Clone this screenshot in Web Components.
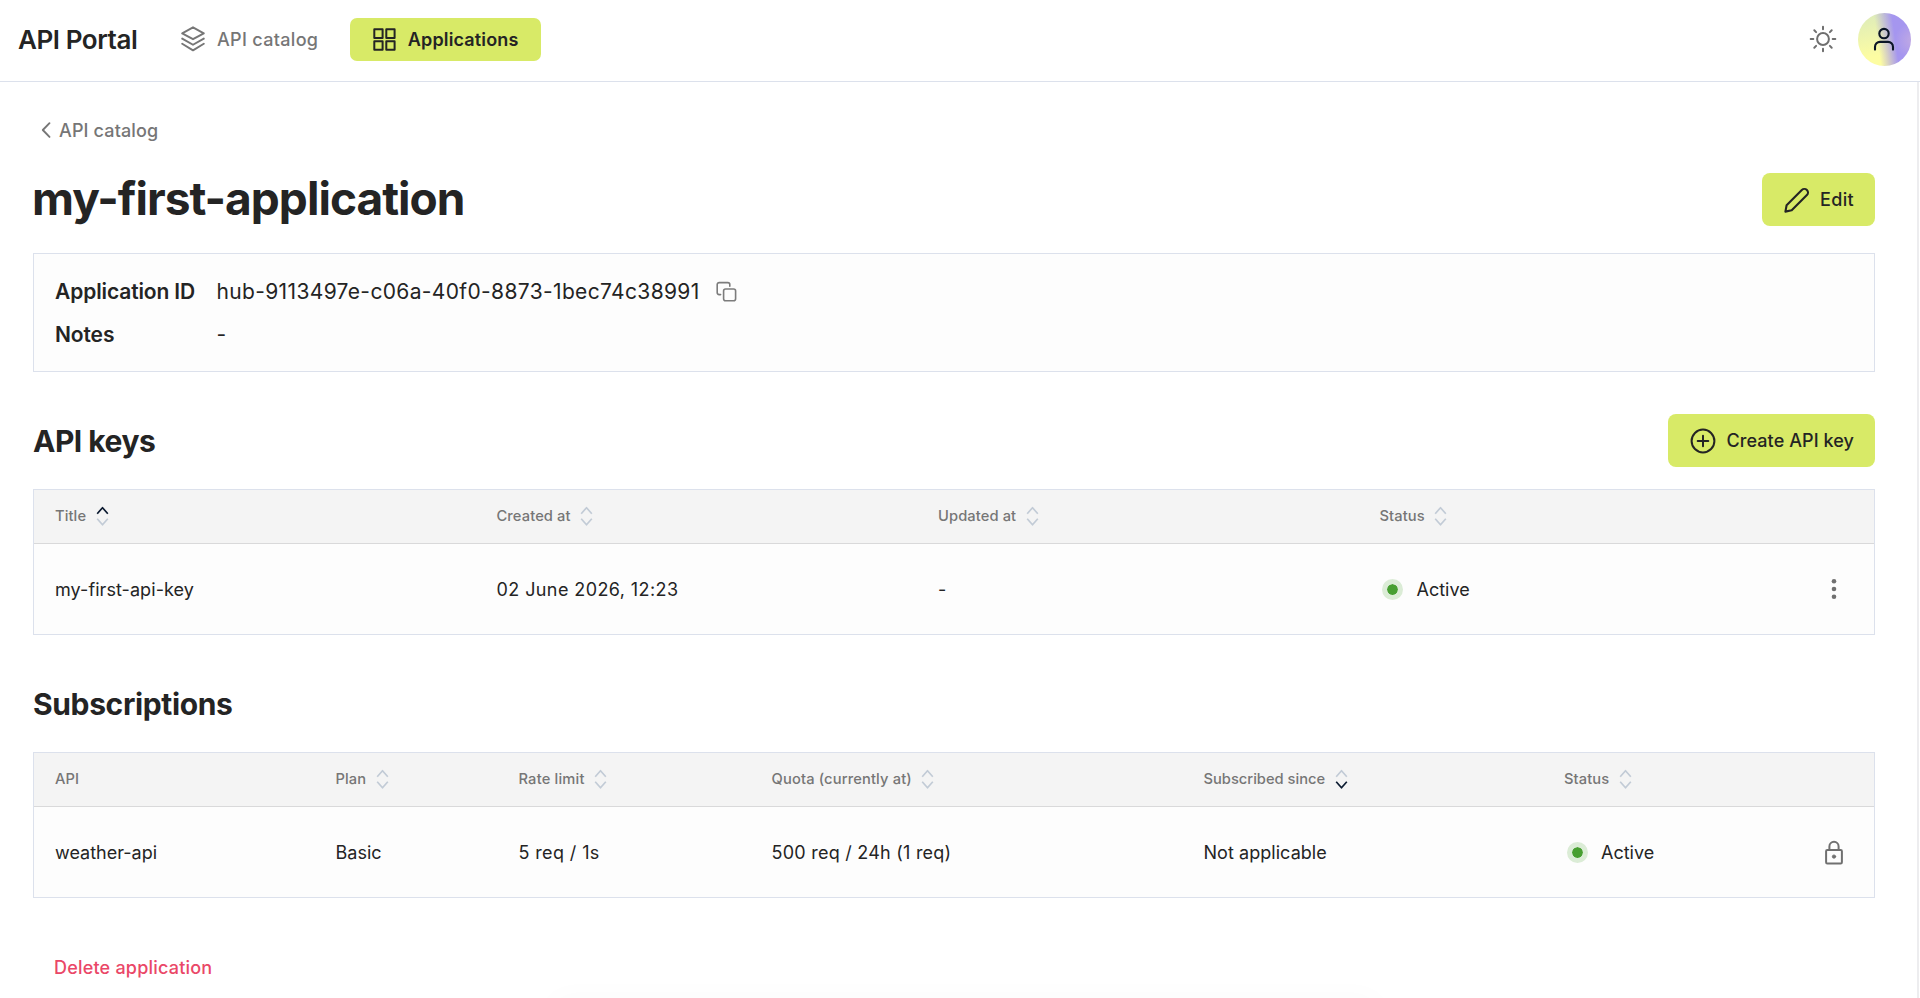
<!DOCTYPE html>
<html lang="en">
<head>
<meta charset="utf-8">
<title>API Portal</title>
<style>
    :root {
        --color-primary: #d8ea67;
        --color-text: #242424;
        --color-muted: #767676;
        --color-border: #dce1ec;
        --color-danger: #ea4767;
    }
    body {
        margin: 0;
        height: 998px;
        overflow: hidden;
        background: #fff;
        color: var(--color-text);
        font-family: Inter, "Liberation Sans", sans-serif;
        font-size: 18px;
    }
</style>
</head>
<body>
<portal-page>
    <portal-header slot="header">
        <nav-item icon="layers" style="letter-spacing: .32px">API catalog</nav-item>
        <nav-item icon="grid" active style="letter-spacing: .15px">Applications</nav-item>
    </portal-header>

    <back-link>API catalog</back-link>

    <section-head level="1">
        my-first-application
        <portal-button slot="action" icon="pencil" style="letter-spacing: .35px">Edit</portal-button>
    </section-head>

    <info-card>
        <info-row label="Application ID" copy>hub-9113497e-c06a-40f0-8873-1bec74c38991</info-row>
        <info-row label="Notes">-</info-row>
    </info-card>

    <section-head style="letter-spacing: -.5px">
        API keys
        <portal-button slot="action" icon="plus" style="letter-spacing: .08px">Create API key</portal-button>
    </section-head>

    <data-table columns="441.5px 441.5px 441.5px 1fr 80px">
        <head-cell sort="asc">Title</head-cell>
        <head-cell sort="none">Created at</head-cell>
        <head-cell sort="none">Updated at</head-cell>
        <head-cell sort="none">Status</head-cell>
        <head-cell></head-cell>
        <body-cell style="letter-spacing: .07px">my-first-api-key</body-cell>
        <body-cell style="letter-spacing: .41px">02 June 2026, 12:23</body-cell>
        <body-cell>-</body-cell>
        <body-cell><status-badge>Active</status-badge></body-cell>
        <body-cell action><svg-icon name="dots"></svg-icon></body-cell>
    </data-table>

    <section-head style="letter-spacing: -.36px">Subscriptions</section-head>

    <data-table columns="280.5px 183px 253px 432px 360.5px 1fr 80px">
        <head-cell>API</head-cell>
        <head-cell sort="none">Plan</head-cell>
        <head-cell sort="none" style="letter-spacing: .18px">Rate limit</head-cell>
        <head-cell sort="none" style="letter-spacing: .14px">Quota (currently at)</head-cell>
        <head-cell sort="desc" style="letter-spacing: 0">Subscribed since</head-cell>
        <head-cell sort="none">Status</head-cell>
        <head-cell></head-cell>
        <body-cell>weather-api</body-cell>
        <body-cell>Basic</body-cell>
        <body-cell style="letter-spacing: .38px">5 req / 1s</body-cell>
        <body-cell style="letter-spacing: .24px">500 req / 24h (1 req)</body-cell>
        <body-cell style="letter-spacing: .05px">Not applicable</body-cell>
        <body-cell><status-badge>Active</status-badge></body-cell>
        <body-cell action><svg-icon name="lock"></svg-icon></body-cell>
    </data-table>

    <delete-link>Delete application</delete-link>
</portal-page>

<script>
const ICONS = {
    layers: { w: 24, h: 26, stroke: 1.9, body: '<path d="M12 1.3 22.8 7.4 12 13.2 1.2 7.4zM1.2 12.6 12 18.8l10.8-6.2M1.2 17.8 12 24.4l10.8-6.6"/>' },
    grid: { w: 23, h: 23, stroke: 2, body: '<path d="M1.3 1.3h8.3v8.6H1.3zM13.3 1.3h8.3v8.6h-8.3zM1.3 13.3h8.3v8.4H1.3zM13.3 13.3h8.3v8.4h-8.3z"/>' },
    sun: { w: 28, h: 28, stroke: 2, body: '<circle cx="14" cy="14" r="5.9"/><path d="M14 1.7v2.6M14 23.7v2.6M1.7 14h2.6M23.7 14h2.6M5.3 5.3l1.8 1.8M20.9 20.9l1.8 1.8M5.3 22.7l1.8-1.8M20.9 7.1l1.8-1.8"/>' },
    user: { w: 24, h: 24, stroke: 2.1, body: '<circle cx="12" cy="6.6" r="4.7"/><path d="M3 22.6v-2.7a5 5 0 0 1 5-5h8a5 5 0 0 1 5 5v2.7"/>' },
    back: { w: 12, h: 18, stroke: 1.9, body: '<path d="M9.5 2.2 2.8 9l6.7 6.9"/>' },
    pencil: { w: 25, h: 26, stroke: 2.1, body: '<path d="M1.4 24.6 2.6 18.2 17.8 3a3.6 3.6 0 0 1 5.1 5.1L7.7 23.3z"/>' },
    plus: { w: 26, h: 26, stroke: 2, body: '<circle cx="13" cy="13" r="11.4"/><path d="M13 7.7v10.6M7.7 13h10.6"/>' },
    copy: { w: 21, h: 21, stroke: 1.6, body: '<rect x="7.6" y="8" width="12" height="11.8" rx="2"/><path d="M4.6 13.6H3.2a2 2 0 0 1-2-2V3.6a2 2 0 0 1 2-2h8.6a2 2 0 0 1 2 2v1.6"/>' },
    dots: { w: 6, h: 22, stroke: 0, body: '<g fill="currentColor"><circle cx="3" cy="3.2" r="2.3"/><circle cx="3" cy="11" r="2.3"/><circle cx="3" cy="18.8" r="2.3"/></g>' },
    lock: { w: 20, h: 25, stroke: 2, body: '<rect x="2.1" y="10" width="15.8" height="13.4" rx="1.2"/><path d="M5.4 10V6.4a4.6 4.6 0 0 1 9.2 0V10"/><circle cx="10" cy="16.6" r="1.7" fill="currentColor" stroke-width=".8"/>' }
};

// attach a shadow root with the given markup
function render(el, html) {
    el.attachShadow({ mode: 'open' });
    el.shadowRoot.innerHTML = html;
}

class SvgIcon extends HTMLElement {
    connectedCallback() {
        if (this.shadowRoot) {
            return;
        }
        const icon = ICONS[this.getAttribute('name')];
        render(this, `
            <style>
                :host { display: inline-flex; flex: none; }
                svg { display: block; }
            </style>
            <svg width="${icon.w}" height="${icon.h}" viewBox="0 0 ${icon.w} ${icon.h}" fill="none"
                stroke="currentColor" stroke-width="${icon.stroke}" stroke-linecap="round" stroke-linejoin="round">${icon.body}</svg>
        `);
    }
}

class PortalPage extends HTMLElement {
    constructor() {
        super();
        render(this, `
            <style>
                :host { display: flex; flex-direction: column; height: 998px; position: relative; }
                main {
                    flex: 1;
                    min-height: 0;
                    display: flex;
                    flex-direction: column;
                    padding: 0 42px 0 33px;
                    border-right: 2px solid #ededef;
                    margin-right: 1px;
                }
                /* faint glow that rises from below the fold */
                .glow {
                    position: absolute;
                    left: 550px;
                    bottom: -30px;
                    width: 830px;
                    height: 30px;
                    border-radius: 30px;
                    box-shadow: 0 0 30px rgba(0,0,0,0.025);
                }
            </style>
            <slot name="header"></slot>
            <main><slot></slot></main>
            <div class="glow"></div>
        `);
    }
}

class PortalHeader extends HTMLElement {
    constructor() {
        super();
        render(this, `
            <style>
                :host {
                    display: flex;
                    align-items: center;
                    flex: none;
                    box-sizing: border-box;
                    height: 82px;
                    padding: 0 9px 3px 18px;
                    border-bottom: 1px solid var(--color-border);
                }
                .brand {
                    width: 141px;
                    font-size: 26px;
                    font-weight: 600;
                    letter-spacing: -.44px;
                    white-space: nowrap;
                }
                nav { display: flex; gap: 9.5px; flex: 1; }
                .theme { color: #6f6f6f; margin-right: 21px; }
                .avatar {
                    display: flex;
                    align-items: center;
                    justify-content: center;
                    width: 53px;
                    height: 53px;
                    border-radius: 50%;
                    color: #0b1526;
                    background:
                        radial-gradient(circle at 104% 52%, rgba(196,172,226,.9) 0, rgba(196,172,226,0) 30%),
                        linear-gradient(82deg, transparent 38%, #a596ef 68%),
                        linear-gradient(170deg, #e0edb8 10%, #fdfda2 75%);
                }
                .avatar svg-icon { margin-right: 1px; }
            </style>
            <div class="brand">API Portal</div>
            <nav><slot></slot></nav>
            <svg-icon class="theme" name="sun"></svg-icon>
            <div class="avatar"><svg-icon name="user"></svg-icon></div>
        `);
    }
}

class NavItem extends HTMLElement {
    connectedCallback() {
        if (this.shadowRoot) {
            return;
        }
        render(this, `
            <style>
                :host {
                    display: flex;
                    align-items: center;
                    gap: 12px;
                    height: 43px;
                    padding: 0 22px;
                    border-radius: 7px;
                    color: var(--color-muted);
                    font-weight: 500;
                    white-space: nowrap;
                }
                :host([active]) {
                    background: var(--color-primary);
                    color: var(--color-text);
                    font-weight: 600;
                    padding: 0 22px 0 23px;
                }
            </style>
            <svg-icon name="${this.getAttribute('icon')}"></svg-icon>
            <span><slot></slot></span>
        `);
    }
}

class BackLink extends HTMLElement {
    constructor() {
        super();
        render(this, `
            <style>
                :host {
                    display: flex;
                    align-items: center;
                    gap: 7px;
                    height: 30px;
                    margin: 33px 0 28px 7px;
                    color: var(--color-muted);
                    font-weight: 500;
                    letter-spacing: .14px;
                }
            </style>
            <svg-icon name="back"></svg-icon>
            <span><slot></slot></span>
        `);
    }
}

class PortalButton extends HTMLElement {
    connectedCallback() {
        if (this.shadowRoot) {
            return;
        }
        render(this, `
            <style>
                :host {
                    display: flex;
                    align-items: center;
                    gap: 11px;
                    height: 53px;
                    padding: 0 21px 0 22px;
                    border-radius: 8px;
                    background: var(--color-primary);
                    color: var(--color-text);
                    font-size: 18px;
                    font-weight: 500;
                    white-space: nowrap;
                }
            </style>
            <svg-icon name="${this.getAttribute('icon')}"></svg-icon>
            <span><slot></slot></span>
        `);
    }
}

class SectionHead extends HTMLElement {
    constructor() {
        super();
        render(this, `
            <style>
                :host {
                    display: flex;
                    align-items: center;
                    justify-content: space-between;
                    height: 53px;
                    margin: 42px 0 22px;
                }
                :host([level="1"]) { margin: 0 0 27px; }
                .title { font-size: 30px; font-weight: 650; white-space: nowrap; }
                :host([level="1"]) .title { font-size: 46px; letter-spacing: -.97px; margin-top: -4px; margin-left: -1px; }
            </style>
            <div class="title"><slot></slot></div>
            <slot name="action"></slot>
        `);
    }
}

class InfoCard extends HTMLElement {
    constructor() {
        super();
        render(this, `
            <style>
                :host {
                    display: block;
                    box-sizing: border-box;
                    height: 119px;
                    padding: 16.5px 21px;
                    border: 1px solid var(--color-border);
                    background: #fdfdfd;
                }
            </style>
            <slot></slot>
        `);
    }
}

class InfoRow extends HTMLElement {
    connectedCallback() {
        if (this.shadowRoot) {
            return;
        }
        const copy = this.hasAttribute('copy') ? '<svg-icon name="copy"></svg-icon>' : '';
        render(this, `
            <style>
                :host {
                    display: flex;
                    align-items: center;
                    height: 42.5px;
                    font-size: 21px;
                }
                b { width: 161.5px; font-weight: 600; letter-spacing: -.12px; }
                span { letter-spacing: .35px; }
                svg-icon { margin-left: 16px; color: #7c7c7c; }
            </style>
            <b>${this.getAttribute('label')}</b>
            <span><slot></slot></span>
            ${copy}
        `);
    }
}

class DataTable extends HTMLElement {
    connectedCallback() {
        if (this.shadowRoot) {
            return;
        }
        render(this, `
            <style>
                :host {
                    display: grid;
                    grid-template-columns: ${this.getAttribute('columns')};
                    grid-template-rows: 54px 90px;
                    border: 1px solid var(--color-border);
                    background: #fdfdfd;
                }
            </style>
            <slot></slot>
        `);
    }
}

class HeadCell extends HTMLElement {
    connectedCallback() {
        if (this.shadowRoot) {
            return;
        }
        const sort = this.getAttribute('sort');
        const arrows = sort ? `
            <svg width="13" height="20" viewBox="0 0 13 20" fill="none" stroke-width="1.7" stroke-linejoin="round">
                <path d="M1.2 7.7 6.5 1.7l5.3 6" stroke="${sort === 'asc' ? '#0b1a30' : '#c2cbd6'}"/>
                <path d="M1.2 12.8l5.3 6 5.3-6" stroke="${sort === 'desc' ? '#0b1a30' : '#c2cbd6'}"/>
            </svg>` : '';
        render(this, `
            <style>
                :host {
                    display: flex;
                    align-items: center;
                    gap: 9.5px;
                    padding: 0 0 1px 21px;
                    border-bottom: 1px solid #d9d9da;
                    background: #f4f4f4;
                    color: var(--color-muted);
                    font-size: 14.7px;
                    font-weight: 500;
                    letter-spacing: .1px;
                    white-space: nowrap;
                }
            </style>
            <span><slot></slot></span>
            ${arrows}
        `);
    }
}

class BodyCell extends HTMLElement {
    constructor() {
        super();
        render(this, `
            <style>
                :host { display: flex; align-items: center; padding-left: 21px; white-space: nowrap; }
                :host([action]) { justify-content: center; padding-left: 0; color: #707070; }
            </style>
            <slot></slot>
        `);
    }
}

class StatusBadge extends HTMLElement {
    constructor() {
        super();
        render(this, `
            <style>
                :host { display: flex; align-items: center; gap: 13.5px; padding-left: 2.5px; }
                i {
                    width: 11px;
                    height: 11px;
                    border: 5.5px solid #dbecd6;
                    border-radius: 50%;
                    background: #479f31;
                    background-clip: padding-box;
                }
            </style>
            <i></i>
            <span><slot></slot></span>
        `);
    }
}

class DeleteLink extends HTMLElement {
    constructor() {
        super();
        render(this, `
            <style>
                :host {
                    display: block;
                    margin: 56px 0 0 21px;
                    color: var(--color-danger);
                    font-weight: 500;
                    letter-spacing: .2px;
                    line-height: 28px;
                }
            </style>
            <slot></slot>
        `);
    }
}

customElements.define('svg-icon', SvgIcon);
customElements.define('portal-page', PortalPage);
customElements.define('portal-header', PortalHeader);
customElements.define('nav-item', NavItem);
customElements.define('back-link', BackLink);
customElements.define('portal-button', PortalButton);
customElements.define('section-head', SectionHead);
customElements.define('info-card', InfoCard);
customElements.define('info-row', InfoRow);
customElements.define('data-table', DataTable);
customElements.define('head-cell', HeadCell);
customElements.define('body-cell', BodyCell);
customElements.define('status-badge', StatusBadge);
customElements.define('delete-link', DeleteLink);
</script>
</body>
</html>
